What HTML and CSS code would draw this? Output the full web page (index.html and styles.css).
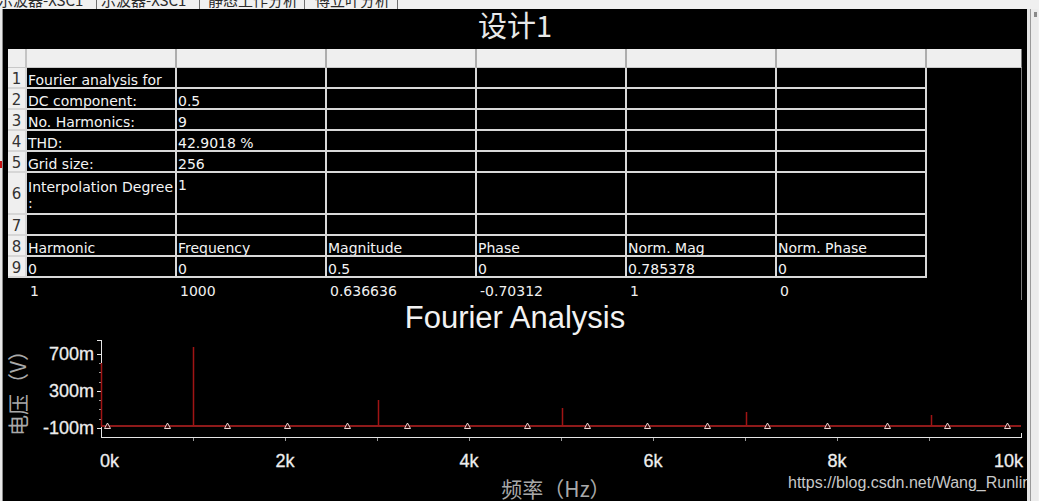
FILE: index.html
```html
<!DOCTYPE html>
<html lang="zh">
<head>
<meta charset="utf-8">
<title>傅立叶分析</title>
<link rel="stylesheet" href="styles.css">
</head>
<body>
<div class="tabs">
  <div class="tab t1">示波器-XSC1</div>
  <div class="tab t2">示波器-XSC1</div>
  <div class="tab t3">静态工作分析</div>
  <div class="tab t4">傅立叶分析</div>
</div>
<div class="main">
  <div class="edge"><span class="mark"></span></div>
  <div class="panel">
    <div class="title">设计1</div>
    <div class="sheet">
      <div class="hd corner"></div><div class="hd"></div><div class="hd"></div><div class="hd"></div><div class="hd"></div><div class="hd"></div><div class="hd"></div><div class="hd last"></div>

      <div class="rh">1</div><div class="c">Fourier analysis for</div><div class="c"></div><div class="c"></div><div class="c"></div><div class="c"></div><div class="c"></div><div class="f"></div>
      <div class="rh">2</div><div class="c">DC component:</div><div class="c">0.5</div><div class="c"></div><div class="c"></div><div class="c"></div><div class="c"></div><div class="f"></div>
      <div class="rh">3</div><div class="c">No. Harmonics:</div><div class="c">9</div><div class="c"></div><div class="c"></div><div class="c"></div><div class="c"></div><div class="f"></div>
      <div class="rh">4</div><div class="c">THD:</div><div class="c">42.9018 %</div><div class="c"></div><div class="c"></div><div class="c"></div><div class="c"></div><div class="f"></div>
      <div class="rh">5</div><div class="c">Grid size:</div><div class="c">256</div><div class="c"></div><div class="c"></div><div class="c"></div><div class="c"></div><div class="f"></div>
      <div class="rh">6</div><div class="c wrap">Interpolation Degree :</div><div class="c">1</div><div class="c"></div><div class="c"></div><div class="c"></div><div class="c"></div><div class="f"></div>
      <div class="rh">7</div><div class="c"></div><div class="c"></div><div class="c"></div><div class="c"></div><div class="c"></div><div class="c"></div><div class="f"></div>
      <div class="rh">8</div><div class="c">Harmonic</div><div class="c">Frequency</div><div class="c">Magnitude</div><div class="c">Phase</div><div class="c">Norm. Mag</div><div class="c">Norm. Phase</div><div class="f"></div>
      <div class="rh">9</div><div class="c">0</div><div class="c">0</div><div class="c">0.5</div><div class="c">0</div><div class="c">0.785378</div><div class="c">0</div><div class="f"></div>
    </div>
    <div class="extra">
      <div></div><div class="x">1</div><div class="x">1000</div><div class="x">0.636636</div><div class="x">-0.70312</div><div class="x">1</div><div class="x">0</div><div class="xf"></div>
    </div>
    <svg class="plot" viewBox="3 300 1024 201" width="1024" height="201" xmlns="http://www.w3.org/2000/svg">
      <text x="515" y="328" class="ptitle" text-anchor="middle">Fourier Analysis</text>
      <text transform="translate(26 388) rotate(-90)" text-anchor="middle" class="alabel">电压（V）</text>
      <text x="556" y="497" text-anchor="middle" class="alabel">频率（Hz）</text>

      <g class="tick">
        <text x="94" y="360" text-anchor="end">700m</text>
        <text x="94" y="397" text-anchor="end">300m</text>
        <text x="94" y="434" text-anchor="end">-100m</text>
        <text x="100" y="467" text-anchor="start">0k</text>
        <text x="285" y="467" text-anchor="middle">2k</text>
        <text x="469" y="467" text-anchor="middle">4k</text>
        <text x="653" y="467" text-anchor="middle">6k</text>
        <text x="837" y="467" text-anchor="middle">8k</text>
        <text x="1023" y="467" text-anchor="end">10k</text>
      </g>

      <g class="axis">
        <line x1="101.5" y1="340" x2="101.5" y2="437"/>
        <line x1="97" y1="340.5" x2="101.5" y2="340.5"/>
        <line x1="97" y1="354.5" x2="101.5" y2="354.5"/>
        <line x1="97" y1="391.5" x2="101.5" y2="391.5"/>
        <line x1="97" y1="428.5" x2="101.5" y2="428.5"/>
        <line x1="101" y1="437.5" x2="1022" y2="437.5"/>
        <line x1="1021.5" y1="433" x2="1021.5" y2="437"/>
      </g>
      <g class="minor">
        <line x1="99" y1="363.5" x2="101" y2="363.5"/>
        <line x1="99" y1="372.5" x2="101" y2="372.5"/>
        <line x1="99" y1="382.5" x2="101" y2="382.5"/>
        <line x1="99" y1="400.5" x2="101" y2="400.5"/>
        <line x1="99" y1="409.5" x2="101" y2="409.5"/>
        <line x1="99" y1="419.5" x2="101" y2="419.5"/>
        <line x1="193.5" y1="438" x2="193.5" y2="441"/>
        <line x1="285.5" y1="438" x2="285.5" y2="441"/>
        <line x1="377.5" y1="438" x2="377.5" y2="441"/>
        <line x1="469.5" y1="438" x2="469.5" y2="441"/>
        <line x1="561.5" y1="438" x2="561.5" y2="441"/>
        <line x1="653.5" y1="438" x2="653.5" y2="441"/>
        <line x1="745.5" y1="438" x2="745.5" y2="441"/>
        <line x1="837.5" y1="438" x2="837.5" y2="441"/>
        <line x1="929.5" y1="438" x2="929.5" y2="441"/>
      </g>

      <g class="trace">
        <line class="base" x1="101" y1="426" x2="1021" y2="426"/>
        <line x1="101.5" y1="363" x2="101.5" y2="426"/>
        <line x1="193.5" y1="347" x2="193.5" y2="426"/>
        <line x1="378.5" y1="400" x2="378.5" y2="426"/>
        <line x1="562.5" y1="408" x2="562.5" y2="426"/>
        <line x1="746.5" y1="412" x2="746.5" y2="426"/>
        <line x1="931.5" y1="415" x2="931.5" y2="426"/>
      </g>

      <g class="marks">
        <polygon points="104.5,428.5 110.5,428.5 107.5,423"/>
        <polygon points="164.5,428.5 170.5,428.5 167.5,423"/>
        <polygon points="224.5,428.5 230.5,428.5 227.5,423"/>
        <polygon points="284.5,428.5 290.5,428.5 287.5,423"/>
        <polygon points="344.5,428.5 350.5,428.5 347.5,423"/>
        <polygon points="404.5,428.5 410.5,428.5 407.5,423"/>
        <polygon points="464.5,428.5 470.5,428.5 467.5,423"/>
        <polygon points="524.5,428.5 530.5,428.5 527.5,423"/>
        <polygon points="584.5,428.5 590.5,428.5 587.5,423"/>
        <polygon points="644.5,428.5 650.5,428.5 647.5,423"/>
        <polygon points="704.5,428.5 710.5,428.5 707.5,423"/>
        <polygon points="764.5,428.5 770.5,428.5 767.5,423"/>
        <polygon points="824.5,428.5 830.5,428.5 827.5,423"/>
        <polygon points="884.5,428.5 890.5,428.5 887.5,423"/>
        <polygon points="944.5,428.5 950.5,428.5 947.5,423"/>
        <polygon points="1004.5,428.5 1010.5,428.5 1007.5,423"/>
      </g>

      <text x="788" y="488" class="wm">https://blog.csdn.net/Wang_Runlin</text>
    </svg>
  </div>
  <div class="scroll"><span class="arrow"></span></div>
</div>
</body>
</html>
```
FILE: styles.css
```css
html, body {
  margin: 0;
  padding: 0;
}
body {
  width: 1039px;
  height: 501px;
  overflow: hidden;
  background: #f0f0f0;
  font-family: "Noto Sans CJK SC", "DejaVu Sans", sans-serif;
}

.tabs {
  height: 9px;
  overflow: hidden;
  display: flex;
  background: #f0f0f0;
}
.tab {
  margin-top: -9px;
  font-size: 15px;
  line-height: 18px;
  color: #2a2a2a;
  padding: 0 4px;
  border-right: 1px solid #6f6f6f;
  white-space: nowrap;
}
.t1 { width: 92px; padding-left: 0; text-indent: -2px; }
.t2 { width: 94px; }
.t3 { width: 92px; padding-left: 8px; }
.t4 { width: 78px; padding-left: 10px; }

.main {
  display: flex;
  height: 492px;
}
.edge {
  width: 2px;
  border-right: 1px solid #8a8a8a;
  background: #e8e8e8;
}
.mark {
  display: block;
  margin-top: 152px;
  width: 2px;
  height: 7px;
  background: #c81010;
}
.panel {
  width: 1024px;
  background: #000;
  display: flex;
  flex-direction: column;
  overflow: hidden;
}
.scroll {
  width: 8px;
  background: #ececec;
  border-left: 3px solid #e4e4e4;
  box-shadow: inset 1px 0 0 #9a9a9a;
}
.arrow {
  display: block;
  margin: 3px 0 0 4px;
  width: 3px;
  height: 5px;
  background: #8a8a8a;
}

.title {
  height: 40px;
  line-height: 31px;
  text-align: center;
  color: #e8e8e8;
  font-size: 29px;
  font-family: "Noto Sans CJK SC", sans-serif;
}

.sheet, .extra {
  margin-left: 5px;
  display: grid;
  grid-template-columns: 19px repeat(6, 150px) 95px;
  font-family: "DejaVu Sans", sans-serif;
  font-size: 14px;
}
.sheet {
  grid-template-rows: 19px repeat(5, 21px) 42px repeat(3, 21px);
}
.sheet > div {
  box-sizing: border-box;
}
.hd {
  background: #efefef;
  border-right: 2px solid #adadad;
  border-bottom: 1px solid #c8c8c8;
}
.hd.corner {
  border-right: 2px solid #c4c4c4;
}
.hd.last {
  border-right: 1px solid #7a7a7a;
}
.rh {
  background: #efefef;
  color: #333;
  font-size: 15px;
  text-align: center;
  border-right: 2px solid #d6d6d6;
  border-bottom: 2px solid #d6d6d6;
  display: flex;
  align-items: center;
  justify-content: center;
  padding-top: 3px;
  line-height: 15px;
}
.c {
  color: #f4f4f4;
  border-right: 2px solid #d8d8d8;
  border-bottom: 2px solid #d8d8d8;
  padding: 5px 0 0 1px;
  line-height: 15px;
  white-space: nowrap;
  overflow: hidden;
}
.c.wrap {
  white-space: normal;
  line-height: 16px;
  padding-top: 6px;
}
.f {
  border-right: 1px solid #7a7a7a;
}
.extra {
  height: 22px;
}
.x {
  color: #f0f0f0;
  padding: 6px 0 0 3px;
  line-height: 15px;
  white-space: nowrap;
}
.xf {
  border-right: 1px solid #7a7a7a;
}

.plot {
  display: block;
  flex: none;
}
.ptitle {
  font-family: "Liberation Sans", Arial, sans-serif;
  font-size: 31px;
  fill: #f2f2f2;
}
.alabel {
  font-family: "Noto Sans CJK SC", sans-serif;
  font-size: 21px;
  fill: #a9a9a9;
}
.tick text {
  font-family: "Liberation Sans", Arial, sans-serif;
  font-size: 18px;
  fill: #ededed;
  stroke: #ededed;
  stroke-width: 0.3;
}
.axis line {
  stroke: #e6e6e6;
  stroke-width: 1;
}
.minor line {
  stroke: #9a9a9a;
  stroke-width: 1;
}
.trace line {
  stroke: #a01414;
  stroke-width: 1.5;
}
.trace line.base {
  stroke: #8e1a1a;
  stroke-width: 2;
}
.marks polygon {
  fill: #3a0c0c;
  stroke: #e8d4d4;
  stroke-width: 1;
}
.wm {
  font-family: "Liberation Sans", Arial, sans-serif;
  font-size: 16px;
  fill: #c8c8c8;
}
```
